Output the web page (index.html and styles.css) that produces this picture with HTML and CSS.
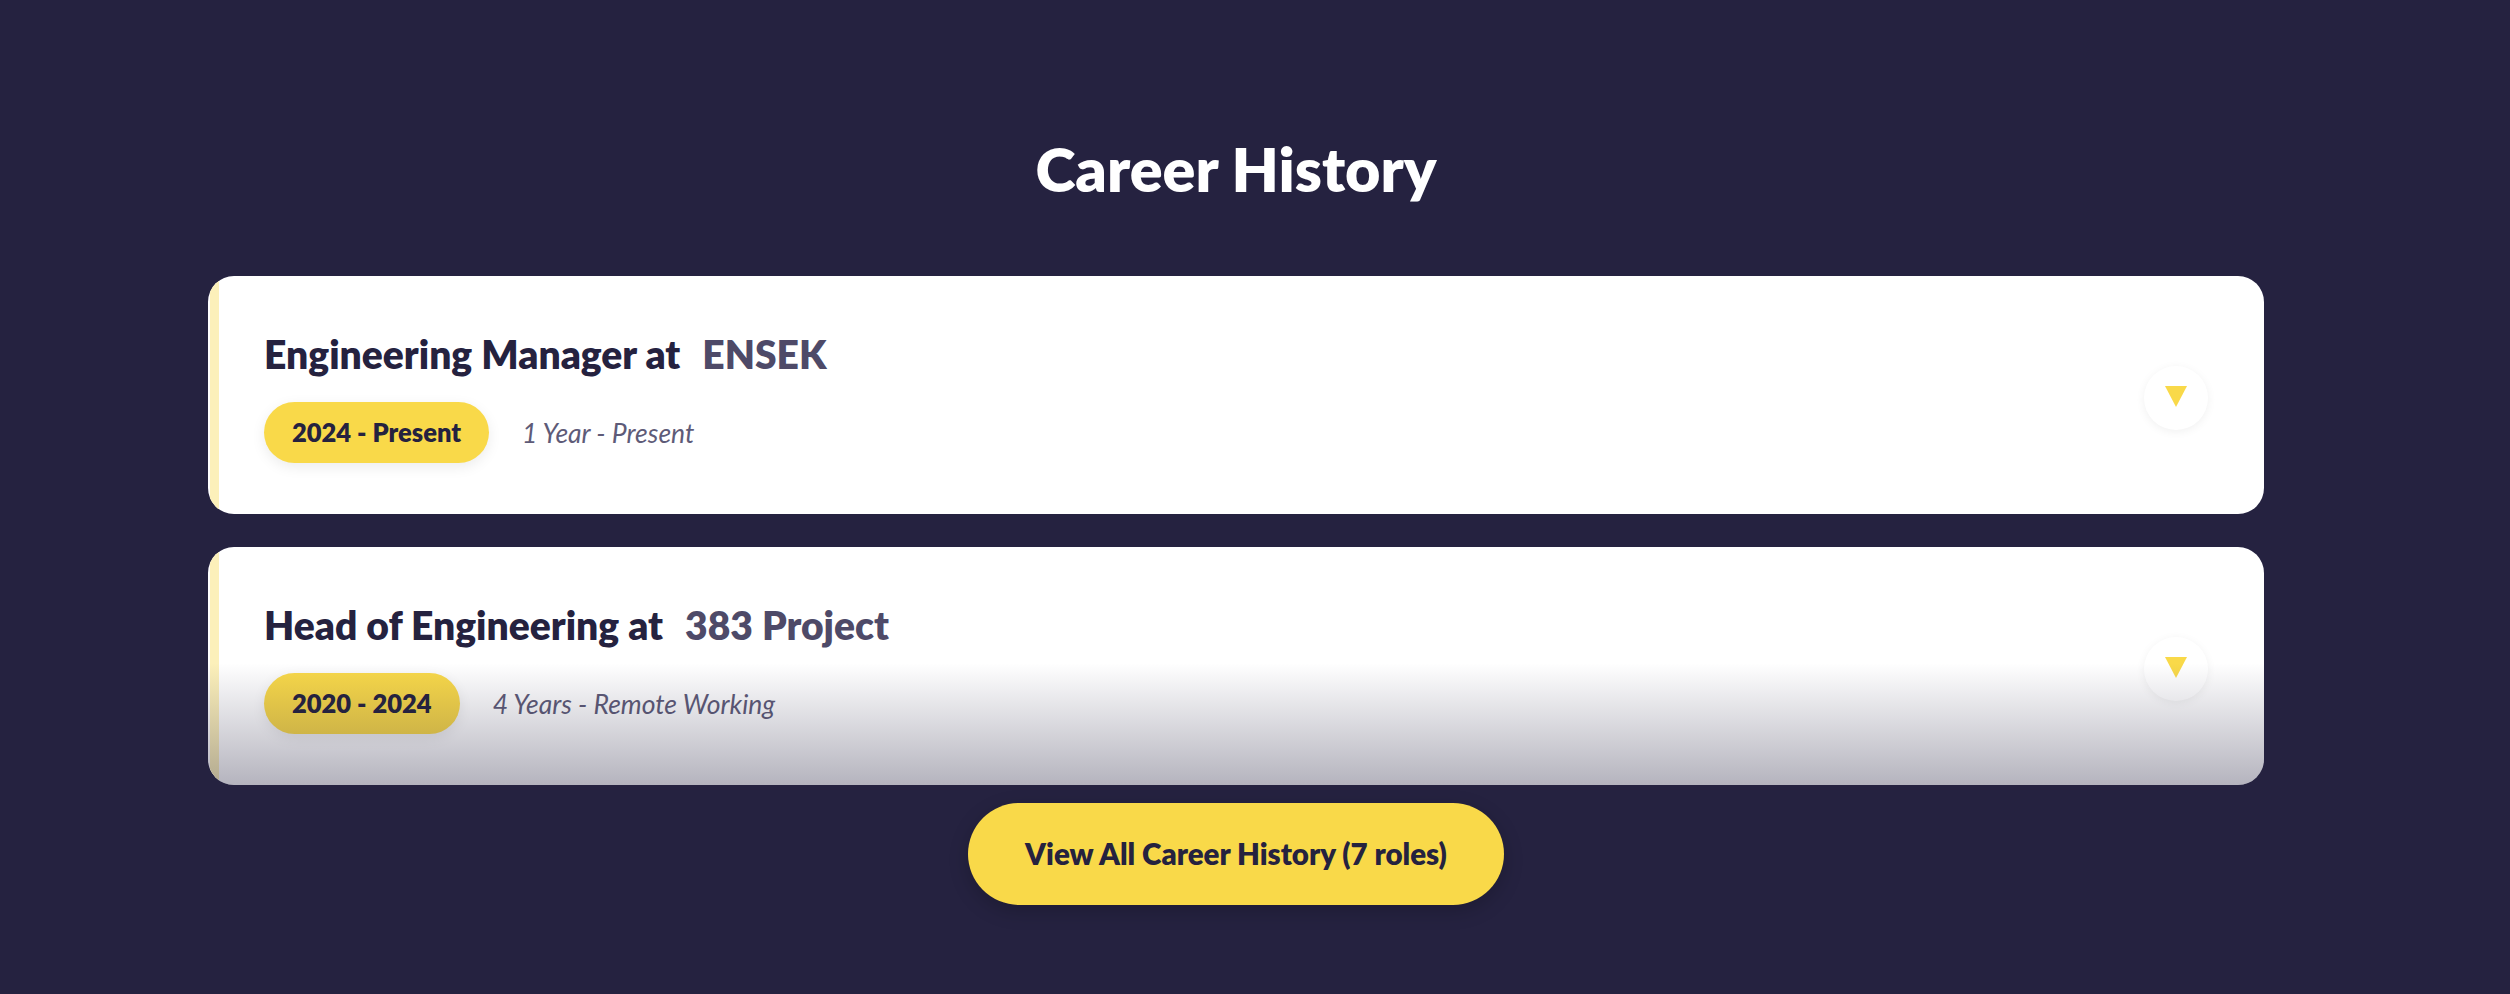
FILE: index.html
```html
<!DOCTYPE html>
<html lang="en">
<head>
<meta charset="UTF-8" />
<meta name="viewport" content="width=device-width, initial-scale=1" />
<title>Career History</title>
<link rel="stylesheet" href="styles.css">
</head>
<body>

<section class="career">
  <h2>Career History</h2>

  <div class="role-list">
    <div class="role-card">
      <div class="role-info">
        <h3>Engineering Manager at<span class="company">ENSEK</span></h3>
        <div class="role-meta">
          <span class="years">2024 - Present</span>
          <span class="duration">1 Year - Present</span>
        </div>
      </div>
      <button class="toggle" type="button" aria-label="Show details">
        <svg width="22" height="21" viewBox="0 0 22 21"><polygon points="0,0 22,0 11,21" fill="#f9d949"/></svg>
      </button>
    </div>

    <div class="role-card faded">
      <div class="role-info">
        <h3>Head of Engineering at<span class="company">383 Project</span></h3>
        <div class="role-meta">
          <span class="years">2020 - 2024</span>
          <span class="duration">4 Years - Remote Working</span>
        </div>
      </div>
      <button class="toggle" type="button" aria-label="Show details">
        <svg width="22" height="21" viewBox="0 0 22 21"><polygon points="0,0 22,0 11,21" fill="#f9d949"/></svg>
      </button>
    </div>
  </div>

  <div class="more">
    <button class="view-all" type="button">View All Career History (7 roles)</button>
  </div>
</section>

</body>
</html>
```

FILE: styles.css
```css
body { margin: 0; background: #252240; font-family: Lato, "Open Sans", sans-serif; }

.career { padding: 132px 246px 80px 208px; }
.career h2 {
  margin: 0 0 71px; text-align: center; color: #fff;
  font-size: 61px; line-height: 1.2; font-weight: 800;
}

.role-list { display: flex; flex-direction: column; gap: 33px; }
.role-card {
  position: relative; overflow: hidden;
  display: flex; align-items: center; justify-content: space-between;
  background: #fff; border-radius: 26px;
  padding: 56px 56px 51px 56px;
}
/* pale accent stripe down the left edge */
.role-card::before {
  content: ""; position: absolute; left: 2px; top: 0; bottom: 0; width: 9px;
  background: #fcf0ba;
}
/* the last visible card fades out towards the button */
.role-card.faded::after {
  content: ""; position: absolute; left: 0; right: 0; bottom: 0; height: 122px;
  background: linear-gradient(to bottom, rgba(37,34,64,0), rgba(37,34,64,0.34));
  pointer-events: none;
}

.role-info h3 {
  margin: 0 0 26px; color: #25223f;
  font-size: 39px; line-height: 44px; font-weight: 800;
}
.company { margin-left: 22px; color: #4e4a68; }

.role-meta { display: flex; align-items: center; }
.years {
  background: #f9d949; color: #25223f; border-radius: 31px;
  padding: 15px 28px; font-size: 25.5px; line-height: 31px; font-weight: 800;
  box-shadow: 0 4px 14px rgba(0,0,0,0.08);
}
.duration { margin-left: 33px; color: #5e5b78; font-style: italic; font-size: 26.5px; }

.toggle {
  width: 64px; height: 64px; border: none; border-radius: 50%;
  background: #fff; box-shadow: 0 2px 10px rgba(0,0,0,0.06);
  display: flex; align-items: center; justify-content: center; padding: 0 0 3px;
}

.more { display: flex; justify-content: center; margin-top: 18px; }
.view-all {
  background: #f9d949; color: #25223f; border: none; border-radius: 51px;
  padding: 33px 57px; font-family: inherit; font-size: 29.5px; line-height: 36px; font-weight: 800;
  box-shadow: 0 6px 20px rgba(0,0,0,0.2);
}
```
